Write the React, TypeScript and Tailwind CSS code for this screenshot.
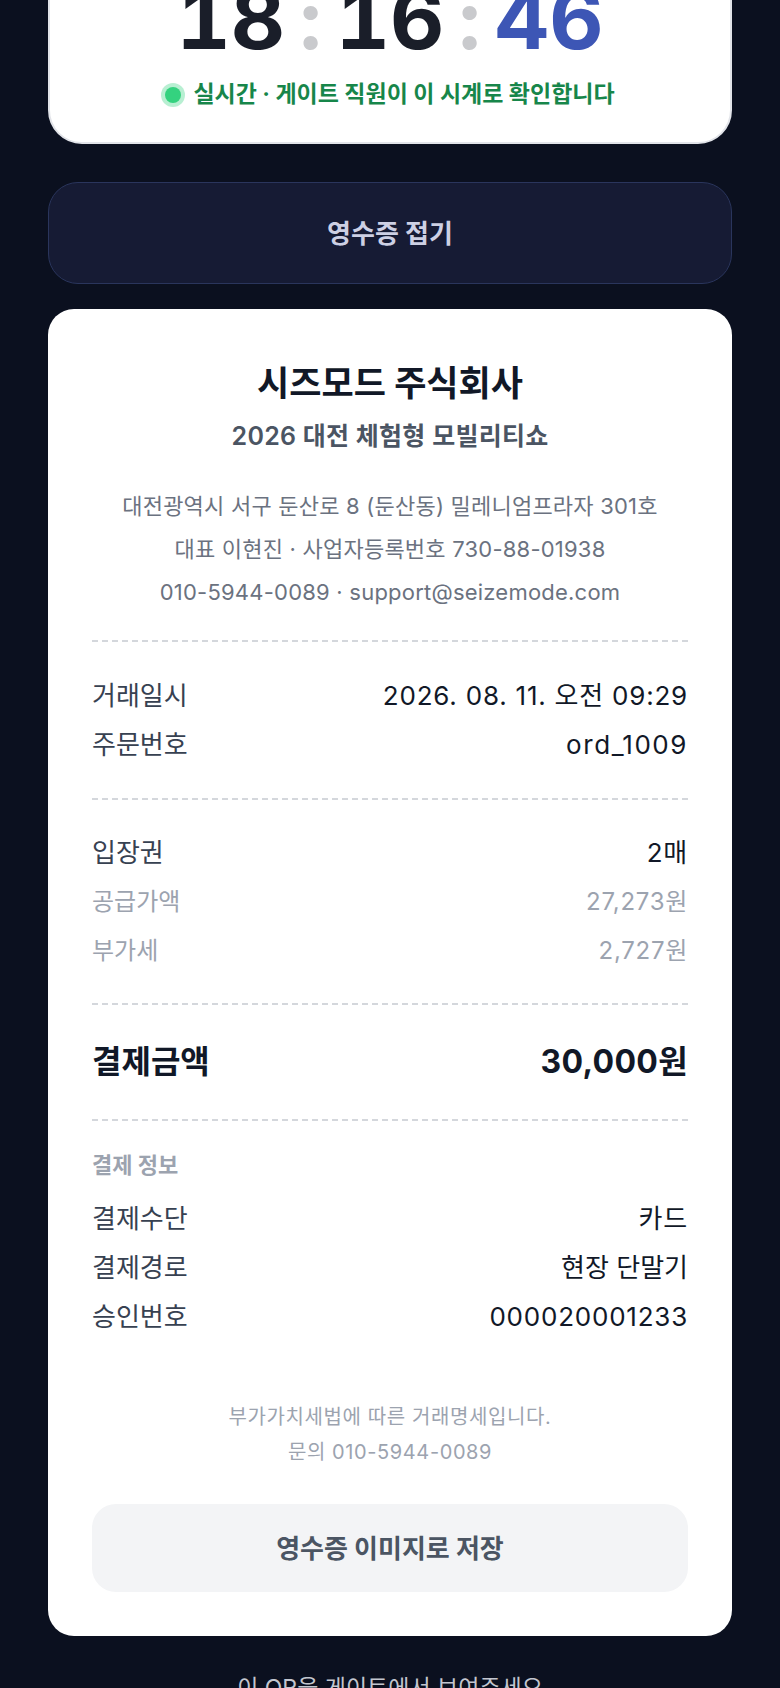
import React from "react";

const Dash = () => (
  <div className="h-[2px] w-full bg-[linear-gradient(to_right,#d4d7dc_60%,transparent_60%)] bg-[length:10px_2px] bg-repeat-x" />
);

function Row({
  label,
  value,
  labelCls = "text-[26px] text-[#374151]",
  valueCls = "text-[26px] tracking-[0.03em] text-[#111827]",
  h = "h-[49px]",
}: {
  label: string;
  value: string;
  labelCls?: string;
  valueCls?: string;
  h?: string;
}) {
  return (
    <div className={`flex items-center justify-between ${h}`}>
      <span className={labelCls}>{label}</span>
      <span className={valueCls}>{value}</span>
    </div>
  );
}

export default function App() {
  return (
    <div className="min-h-screen overflow-hidden bg-[#0b101f] px-12 font-[family-name:Inter,'Noto_Sans_CJK_KR',sans-serif]">
      {/* clock card */}
      <div className="mt-[-60px] rounded-[34px] border-2 border-[#e2e4e9] bg-white pt-[35px] pb-[32px]">
        <div className="flex items-baseline justify-center gap-[14px] text-[84px] font-bold leading-none tabular-nums">
          <span className="text-[#1a1e29]">18</span>
          <span className="text-[#c9cacd]">:</span>
          <span className="text-[#1a1e29]">16</span>
          <span className="text-[#c9cacd]">:</span>
          <span className="text-[#3d56b5]">46</span>
        </div>
        <div className="mt-[18px] flex items-center justify-center gap-[12px]">
          <span className="h-4 w-4 rounded-full bg-[#34d27f] ring-4 ring-[#34d27f]/35" />
          <span className="text-[23px] font-bold leading-[31px] text-[#17864a]">
            실시간 · 게이트 직원이 이 시계로 확인합니다
          </span>
        </div>
      </div>

      {/* collapse button */}
      <button className="mt-[38px] flex h-[102px] w-full items-center justify-center rounded-[30px] border-[1.5px] border-[#2a355c] bg-[#161b34] text-[26px] font-bold text-[#cdd0e4]">
        영수증 접기
      </button>

      {/* receipt */}
      <div className="mt-[25px] rounded-[26px] bg-white px-11 pt-[52px] pb-11">
        <div className="text-center text-[35px] font-bold leading-[44px] text-[#111827]">
          시즈모드 주식회사
        </div>
        <div className="mt-[16px] text-center text-[25px] font-semibold leading-[30px] tracking-[0.01em] text-[#4b5563]">
          2026 대전 체험형 모빌리티쇼
        </div>
        <div className="mt-[34px] text-center text-[22px] leading-[43px] tracking-[0.01em] text-[#6b7280]">
          <p>대전광역시 서구 둔산로 8 (둔산동) 밀레니엄프라자 301호</p>
          <p>대표 이현진 · 사업자등록번호 730-88-01938</p>
          <p>010-5944-0089 · support@seizemode.com</p>
        </div>

        <div className="mt-[26px]">
          <Dash />
        </div>

        <div className="py-[29px]">
          <Row label="거래일시" value="2026. 08. 11. 오전 09:29" />
          <Row label="주문번호" value="ord_1009" valueCls="text-[26px] tracking-[0.06em] text-[#111827]" />
        </div>

        <Dash />

        <div className="py-[28px]">
          <Row label="입장권" value="2매" />
          <Row
            label="공급가액"
            value="27,273원"
            labelCls="text-[24px] text-[#9ca3af]"
            valueCls="text-[24px] tracking-[0.03em] text-[#9ca3af]"
          />
          <Row
            label="부가세"
            value="2,727원"
            labelCls="text-[24px] text-[#9ca3af]"
            valueCls="text-[24px] tracking-[0.03em] text-[#9ca3af]"
          />
        </div>

        <Dash />

        <div className="py-[28px]">
          <Row
            label="결제금액"
            value="30,000원"
            h="h-[58px]"
            labelCls="text-[32px] font-bold text-[#111827]"
            valueCls="text-[32px] font-bold tracking-[0.01em] text-[#111827]"
          />
        </div>

        <Dash />

        <div className="pt-[31px]">
          <div className="text-[22px] font-bold leading-[26px] text-[#9ca3af]">결제 정보</div>
          <div className="mt-[16px]">
            <Row label="결제수단" value="카드" />
            <Row label="결제경로" value="현장 단말기" valueCls="text-[26px] text-[#111827]" />
            <Row label="승인번호" value="000020001233" />
          </div>
        </div>

        <div className="mt-[59px] text-center text-[20px] leading-[35px] tracking-[0.03em] text-[#9ca3af]">
          <p>부가가치세법에 따른 거래명세입니다.</p>
          <p>문의 010-5944-0089</p>
        </div>

        <button className="mt-[34px] flex h-[88px] w-full items-center justify-center rounded-[24px] bg-[#f3f4f6] text-[26px] font-bold text-[#4b5563]">
          영수증 이미지로 저장
        </button>
      </div>

      <div className="mt-[36px] pb-10 text-center text-[23px] leading-[32px] text-[#c3c6cf]">
        이 QR을 게이트에서 보여주세요
      </div>
    </div>
  );
}
